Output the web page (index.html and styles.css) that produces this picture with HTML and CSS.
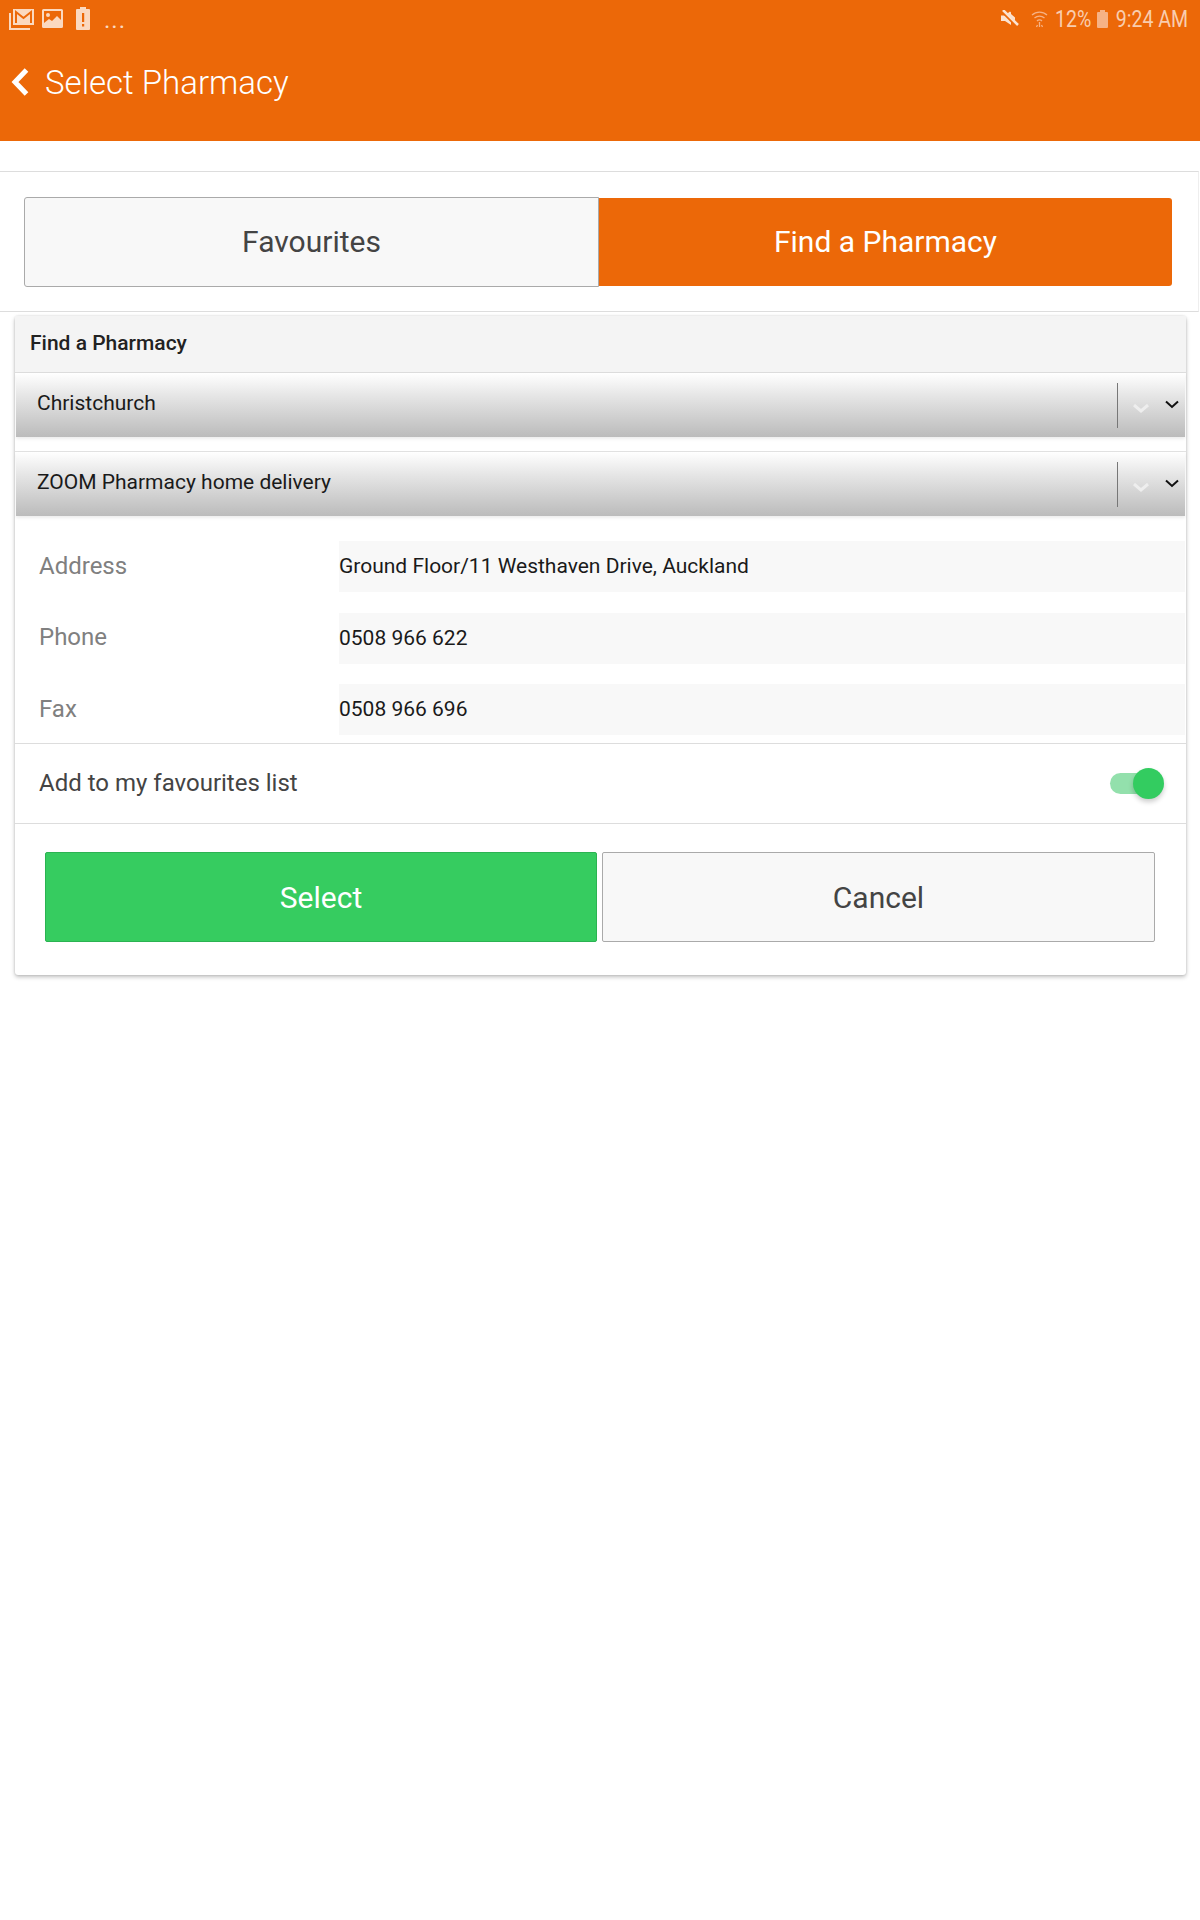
FILE: index.html
```html
<!DOCTYPE html>
<html>
<head>
<meta charset="UTF-8">
<title>Select Pharmacy</title>
<link rel="stylesheet" href="styles.css">
</head>
<body>
	<div class="topbar">
		<div class="status">
			<div class="status-left">
				<!-- notification icons -->
				<svg class="ico-mail" width="26" height="22" viewBox="0 0 26 22">
					<path d="M1 5v16h20" fill="none" stroke="#fbd9c0" stroke-width="2"/>
					<path d="M4 1h21v16H4z" fill="#fbd9c0"/>
					<path d="M7 15V4l7.500 6L22 4v11" fill="none" stroke="#ec6808" stroke-width="2"/>
				</svg>
				<svg class="ico-img" width="21" height="19" viewBox="0 0 21 19">
					<path d="M0 1.500A1.500 1.500 0 0 1 1.500 0h18A1.500 1.500 0 0 1 21 1.500v16a1.500 1.500 0 0 1-1.500 1.500h-18A1.500 1.500 0 0 1 0 17.500z" fill="#fbd9c0"/>
					<path d="M2 2h17v9l-4-4-5 5-3-2-5 4z" fill="#ec6808"/>
					<circle cx="6" cy="6" r="2" fill="#fbd9c0"/>
				</svg>
				<svg class="ico-batt" width="14" height="23" viewBox="0 0 14 23">
					<path d="M4 0h6v2h3a1 1 0 0 1 1 1v19a1 1 0 0 1-1 1H1a1 1 0 0 1-1-1V3a1 1 0 0 1 1-1h3z" fill="#fbd9c0"/>
					<path d="M6 6h2.200v9H6zM6 17h2.200v2.500H6z" fill="#ec6808"/>
				</svg>
				<span class="dots">...</span>
			</div>
			<div class="status-right">
				<svg class="ico-mute" width="18" height="18" viewBox="0 0 18 18">
					<path d="M0 5.500h4l3-2.500 2-1.500 1 1v12.500L4 11H0z" fill="#fbe3d1"/>
					<path d="M10 4l4 3.500v3L10 7z" fill="#fbe3d1"/>
					<path d="M1 0.500l16 16" stroke="#ec6808" stroke-width="4"/>
					<path d="M2 0l15 15" stroke="#fbe3d1" stroke-width="2.500"/>
				</svg>
				<svg class="ico-wifi" width="17" height="19" viewBox="0 0 17 19">
					<path d="M1 5a11 11 0 0 1 15 0M3.500 8a7.500 7.500 0 0 1 10 0M6 11a3.500 3.500 0 0 1 5 0" fill="none" stroke="#f6b285" stroke-width="1.300"/>
					<path d="M8.500 12v5M6.500 15l-1 2M10.500 15l1 2" fill="none" stroke="#f6b285" stroke-width="1.300"/>
				</svg>
				<span class="pct">12%</span>
				<svg class="ico-level" width="11" height="18" viewBox="0 0 11 18">
					<path d="M3 0h5v2h2a1 1 0 0 1 1 1v14a1 1 0 0 1-1 1H1a1 1 0 0 1-1-1V3a1 1 0 0 1 1-1h2z" fill="#f6b285"/>
				</svg>
				<span class="clock">9:24 AM</span>
			</div>
		</div>
		<div class="titlebar">
			<svg width="18" height="30" viewBox="0 0 18 30">
				<path d="M15.500 3L4 15l11.500 12" fill="none" stroke="#fff" stroke-width="5"/>
			</svg>
			<span class="title">Select Pharmacy</span>
		</div>
	</div>

	<div class="tabwrap">
		<div class="tabs">
			<div class="tab">Favourites</div>
			<div class="tab on">Find a Pharmacy</div>
		</div>
	</div>

	<div class="card">
		<div class="card-head">Find a Pharmacy</div>

		<div class="selectrow">
			<div class="select">
				<span class="select-text">Christchurch</span>
				<span class="divider"></span>
				<svg class="chev-light" width="16" height="9" viewBox="0 0 16 9"><path d="M1 1l7 6 7-6" fill="none" stroke="#eee" stroke-width="3"/></svg>
				<svg class="chev-dark" width="14" height="9" viewBox="0 0 14 9"><path d="M1 1.500l6 5.500 6-5.500" fill="none" stroke="#111" stroke-width="2"/></svg>
			</div>
		</div>
		<div class="selectrow">
			<div class="select">
				<span class="select-text">ZOOM Pharmacy home delivery</span>
				<span class="divider"></span>
				<svg class="chev-light" width="16" height="9" viewBox="0 0 16 9"><path d="M1 1l7 6 7-6" fill="none" stroke="#eee" stroke-width="3"/></svg>
				<svg class="chev-dark" width="14" height="9" viewBox="0 0 14 9"><path d="M1 1.500l6 5.500 6-5.500" fill="none" stroke="#111" stroke-width="2"/></svg>
			</div>
		</div>

		<ul class="info">
			<li><label class="info-label">Address</label><span class="info-value">Ground Floor/11 Westhaven Drive, Auckland</span></li>
			<li><label class="info-label">Phone</label><span class="info-value">0508 966 622</span></li>
			<li><label class="info-label">Fax</label><span class="info-value">0508 966 696</span></li>
		</ul>

		<div class="favrow">
			<span>Add to my favourites list</span>
			<div class="toggle"><span class="knob"></span></div>
		</div>

		<div class="actions">
			<div class="btn green">Select</div>
			<div class="btn">Cancel</div>
		</div>
	</div>
</body>
</html>
```

FILE: styles.css
```css
body {
	margin: 0;
	padding: 0 0 20px;
	background-color: #fff;
	font-family: Roboto, "Liberation Sans", sans-serif;
}

.topbar {
	height: 141px;
	background-color: #ec6808;
}

.status {
	display: flex;
	justify-content: space-between;
	height: 36px;
	padding: 0 12px 0 9px;
}

.status-left,
.status-right {
	display: flex;
	align-items: center;
}

.status-left {
	height: 37px;
}

.ico-img {
	margin-left: 7px;
}

.ico-batt {
	margin-left: 13px;
}

.dots {
	margin-left: 14px;
	color: #fbd9c0;
	font-size: 24px;
	letter-spacing: 1px;
	line-height: 24px;
	padding-top: 2px;
}

.status-right {
	height: 38px;
	color: #f9cdae;
	font-size: 23px;
}

.status-right span {
	display: inline-block;
	transform: scaleX(0.85);
}

.ico-wifi {
	margin-left: 12px;
}

.pct {
	margin-left: 7px;
	width: 36px;
	transform-origin: left;
}

.ico-level {
	margin-left: 6px;
}

.clock {
	margin-left: -5px;
	width: 85px;
	white-space: nowrap;
	transform-origin: right;
	text-align: right;
}

.titlebar {
	display: flex;
	align-items: center;
	height: 46px;
	margin-top: 23px;
	padding-left: 11px;
	color: #fff;
}

.title {
	margin-left: 16px;
	font-size: 33px;
	font-weight: 300;
}

.tabwrap {
	height: 141px;
	margin-top: 30px;
	padding: 25px 25px 0 24px;
	box-sizing: border-box;
	border: solid 1px #ddd;
	border-left: none;
	border-right-color: #eee;
	width: 1199px;
}

.tabs {
	display: flex;
	height: 90px;
}

.tab {
	width: 575px;
	box-sizing: border-box;
	display: flex;
	align-items: center;
	justify-content: center;
	padding-bottom: 2px;
	background-color: #f8f8f8;
	border: solid 1px #aaa;
	border-radius: 3px 0 0 3px;
	color: #444;
	font-size: 30px;
}

.tab.on {
	width: 573px;
	margin: 1px 0;
	border: none;
	border-radius: 0 3px 3px 0;
	background-color: #ec6808;
	color: #fff;
}

.card {
	width: 1171px;
	margin: 4px 0 0 15px;
	box-sizing: border-box;
	background-color: #fff;
	border-radius: 3px;
	box-shadow: 0 2px 4px rgba(0, 0, 0, 0.25), 0 0 2px rgba(0, 0, 0, 0.15);
	height: 659px;
}

.card-head {
	height: 57px;
	padding-left: 15px;
	line-height: 55px;
	box-sizing: border-box;
	background-color: #f4f4f4;
	border-bottom: solid 1px #ddd;
	color: #222;
	font-size: 21px;
	font-weight: 500;
}

.selectrow {
	padding-left: 1px;
	padding-right: 1px;
	height: 79px;
	box-sizing: border-box;
	border-bottom: solid 1px #e2e2e2;
}

.selectrow + .selectrow {
	border-bottom: none;
}

.select {
	display: flex;
	align-items: center;
	height: 64px;
	padding: 0 6px 0 21px;
	background: linear-gradient(#fff, #e6e6e6 35%, #bbb);
	box-shadow: 0 2px 3px rgba(0, 0, 0, 0.08);
	color: #1a1a1a;
	font-size: 21px;
}

.select-text {
	flex: 1;
	padding-bottom: 4px;
}

.divider {
	width: 1px;
	height: 45px;
	background-color: #777;
}

.chev-light {
	margin-left: 15px;
	margin-top: 6px;
}

.chev-dark {
	margin-left: 16px;
	margin-bottom: 1px;
}

.info {
	list-style-type: none;
	margin: 0;
	padding: 10px 1px 0 0;
	height: 213px;
	box-sizing: border-box;
	display: flex;
	flex-direction: column;
	gap: 20.500px;
	border-bottom: solid 1px #ddd;
}

.info > li {
	display: flex;
	align-items: center;
	height: 51px;
}

.info-label {
	display: inline-block;
	width: 324px;
	box-sizing: border-box;
	padding: 0 0 2px 24px;
	color: #808080;
	font-size: 24px;
}

.info-value {
	flex: 1;
	height: 51px;
	line-height: 51px;
	background-color: #f8f8f8;
	color: #1a1a1a;
	font-size: 21px;
}

.favrow {
	display: flex;
	align-items: center;
	justify-content: space-between;
	height: 80px;
	padding: 0 21px 1px 24px;
	box-sizing: border-box;
	border-bottom: solid 1px #ddd;
	color: #444;
	font-size: 24px;
}

.toggle {
	position: relative;
	width: 40px;
	height: 21px;
	margin-right: 15px;
	border-radius: 11px;
	background-color: #93e0ac;
}

.knob {
	position: absolute;
	top: -5px;
	left: 23px;
	width: 31px;
	height: 31px;
	border-radius: 50%;
	background-color: #33cc60;
	box-shadow: 0 3px 5px rgba(0, 0, 0, 0.2);
}

.actions {
	display: flex;
	gap: 5px;
	padding: 28px 0 0 30px;
}

.btn {
	width: 553px;
	height: 90px;
	box-sizing: border-box;
	display: flex;
	align-items: center;
	justify-content: center;
	background-color: #f8f8f8;
	border: solid 1px #aaa;
	border-radius: 2px;
	color: #444;
	font-size: 30px;
}

.btn.green {
	width: 552px;
	background-color: #36cc60;
	border-color: #2bb352;
	color: #fff;
}
```
